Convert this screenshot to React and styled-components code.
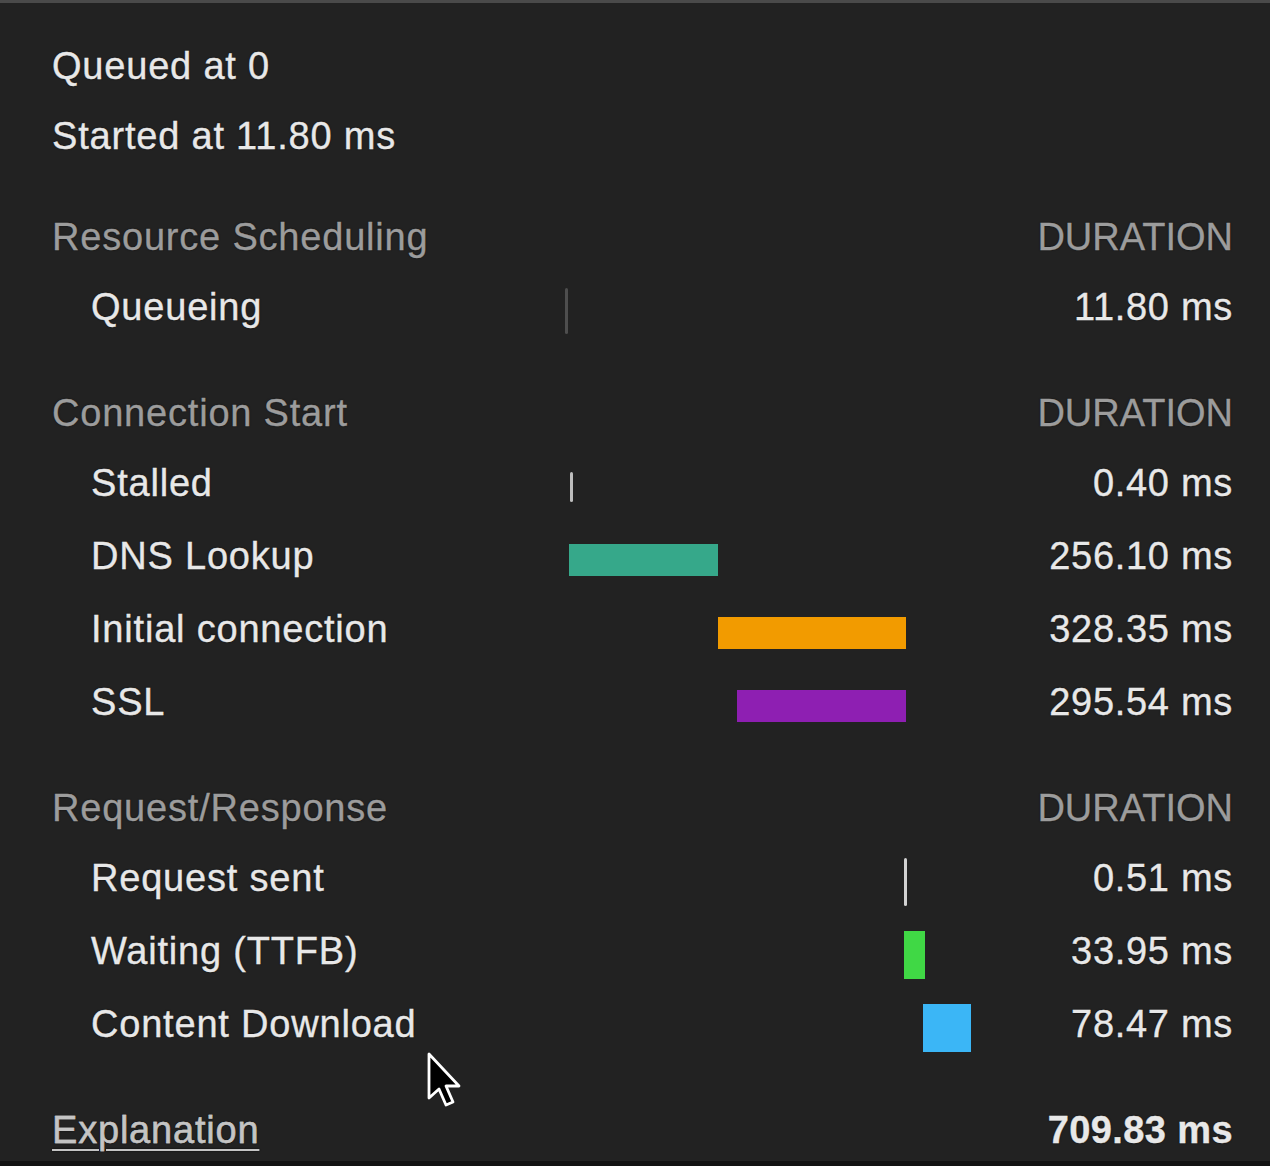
import React from "react";
import styled, { createGlobalStyle } from "styled-components";

const Global = createGlobalStyle`
  html, body { margin: 0; padding: 0; background: #121212; }
  body { font-family: "Liberation Sans", Arial, sans-serif; }
`;

const Panel = styled.div`
  position: relative;
  box-sizing: border-box;
  width: 1270px;
  height: 1161px;
  overflow: hidden;
  background: #222222;
  border-top: 3px solid #4a4a4a;
  padding: 28px 37px 0 52px;
  color: #e8e8e8;
  font-size: 38px;
  letter-spacing: 0.8px;
  -webkit-text-stroke: 0.35px currentColor;
  text-shadow: 0 0 2px rgba(0, 0, 0, 0.7);
`;

const InfoLine = styled.div`
  height: 70px;
  line-height: 70px;
  white-space: nowrap;
`;

const Section = styled.div`
  margin-top: ${(p) => p.$gap}px;
`;

const Grid = styled.div`
  display: grid;
  grid-template-columns: 513px 406px 1fr;
  align-items: center;
  height: ${(p) => p.$h}px;
`;

const HeaderText = styled.div`
  color: #9c9c9c;
  white-space: nowrap;
`;

const HeaderRight = styled.div`
  grid-column: 3;
  color: #9c9c9c;
  text-align: right;
  letter-spacing: 0px;
`;

const Label = styled.div`
  padding-left: 39px;
  white-space: nowrap;
`;

const Track = styled.div`
  position: relative;
  height: 100%;
`;

const Bar = styled.div`
  position: absolute;
  top: calc(50% + 3px);
  height: ${(p) => p.$h}px;
  transform: translateY(-50%);
  background: ${(p) => p.$c};
  min-width: 3px;
  border-radius: ${(p) => (p.$thin ? "2px" : "0")};
`;

const Duration = styled.div`
  text-align: right;
  white-space: nowrap;
  font-weight: ${(p) => (p.$bold ? 700 : 400)};
  letter-spacing: ${(p) => (p.$bold ? "0.4px" : "0.7px")};
`;

const Link = styled.span`
  color: #c4c4c4;
  text-decoration: underline;
  text-underline-offset: 6px;
  text-decoration-thickness: 2px;
`;

const Cursor = styled.svg`
  position: absolute;
  left: 425px;
  top: 1047px;
`;

const TOTAL = 709.83;

const sections = [
  {
    title: "Resource Scheduling",
    gap: 32,
    rows: [
      { label: "Queueing", start: 0, dur: 11.8, color: "#4e4e4e", h: 46, thin: true, text: "11.80 ms" },
    ],
  },
  {
    title: "Connection Start",
    gap: 35,
    rows: [
      { label: "Stalled", start: 9.5, dur: 0.4, color: "#bdbdbd", h: 30, thin: true, text: "0.40 ms" },
      { label: "DNS Lookup", start: 7, dur: 261.3, color: "#36a88a", h: 32, text: "256.10 ms" },
      { label: "Initial connection", start: 266.7, dur: 329.5, color: "#f29b00", h: 32, text: "328.35 ms" },
      { label: "SSL", start: 301.1, dur: 295.1, color: "#8e1fb2", h: 32, text: "295.54 ms" },
    ],
  },
  {
    title: "Request/Response",
    gap: 35,
    rows: [
      { label: "Request sent", start: 593.5, dur: 0.5, color: "#d2d2d2", h: 48, thin: true, text: "0.51 ms" },
      { label: "Waiting (TTFB)", start: 593.5, dur: 36.5, color: "#40d845", h: 48, text: "33.95 ms" },
      { label: "Content Download", start: 626.5, dur: 83.3, color: "#3bb6f6", h: 48, text: "78.47 ms" },
    ],
  },
];

const pct = (v) => `${(v / TOTAL) * 100}%`;

export default function App() {
  return (
    <>
      <Global />
      <Panel>
        <InfoLine>Queued at 0</InfoLine>
        <InfoLine>Started at 11.80 ms</InfoLine>
        {sections.map((s) => (
          <Section key={s.title} $gap={s.gap}>
            <Grid $h={68}>
              <HeaderText>{s.title}</HeaderText>
              <HeaderRight>DURATION</HeaderRight>
            </Grid>
            {s.rows.map((r) => (
              <Grid key={r.label} $h={73}>
                <Label>{r.label}</Label>
                <Track>
                  <Bar
                    $c={r.color}
                    $h={r.h}
                    $thin={r.thin}
                    style={{ left: pct(r.start), width: r.thin ? 3 : pct(r.dur) }}
                  />
                </Track>
                <Duration>{r.text}</Duration>
              </Grid>
            ))}
          </Section>
        ))}
        <Section $gap={35}>
          <Grid $h={68}>
            <Link>Explanation</Link>
            <Duration $bold style={{ gridColumn: 3 }}>709.83 ms</Duration>
          </Grid>
        </Section>
        <Cursor width="44" height="64" viewBox="0 0 22 32">
          <path
            d="M2 2 L2 24 L7 19.5 L10.5 27.5 L14 26 L10.5 18 L17 18 Z"
            fill="#000"
            stroke="#fff"
            strokeWidth="1.4"
            strokeLinejoin="round"
          />
        </Cursor>
      </Panel>
    </>
  );
}
